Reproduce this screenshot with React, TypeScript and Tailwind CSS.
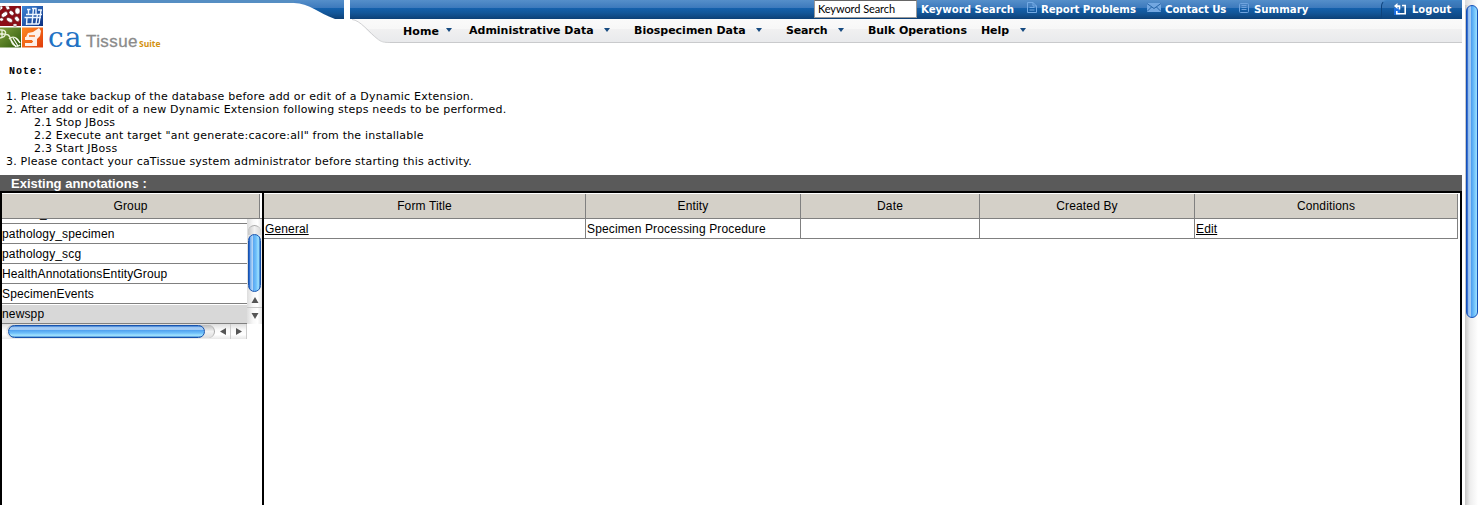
import React from "react";

const verdana = "font-['DejaVu_Sans',sans-serif]";
const helvetica = "font-['Liberation_Sans',sans-serif]";

const steps: { text: string; className: string }[] = [
  { text: "1. Please take backup of the database before add or edit of a Dynamic Extension.", className: "pl-[6px] tracking-[0.22px]" },
  { text: "2. After add or edit of a new Dynamic Extension following steps needs to be performed.", className: "pl-[6px]" },
  { text: "2.1 Stop JBoss", className: "pl-[34px]" },
  { text: '2.2 Execute ant target "ant generate:cacore:all" from the installable', className: "pl-[34px]" },
  { text: "2.3 Start JBoss", className: "pl-[34px]" },
  { text: "3. Please contact your caTissue system administrator before starting this activity.", className: "pl-[6px]" },
];

const groups = ["pathology_specimen", "pathology_scg", "HealthAnnotationsEntityGroup", "SpecimenEvents"];

const columns = [
  { title: "Form Title", width: "w-[322px]", value: "General", link: true },
  { title: "Entity", width: "w-[215px]", value: "Specimen Processing Procedure", link: false },
  { title: "Date", width: "w-[179px]", value: "", link: false },
  { title: "Created By", width: "w-[215px]", value: "", link: false },
  { title: "Conditions", width: "w-[263px]", value: "Edit", link: true },
];

const navItems = [
  { label: "Home", width: "w-[66px]", arrow: "left-[43px]", className: "pt-px", tracking: "tracking-[0.1px]" },
  { label: "Administrative Data", width: "w-[165px]", arrow: "left-[135px]", className: "", tracking: "" },
  { label: "Biospecimen Data", width: "w-[152px]", arrow: "left-[122px]", className: "", tracking: "" },
  { label: "Search", width: "w-[82px]", arrow: "left-[52px]", className: "", tracking: "tracking-[-0.2px]" },
  { label: "Bulk Operations", width: "w-[113px]", arrow: "", className: "", tracking: "tracking-[-0.05px]" },
  { label: "Help", width: "w-[60px]", arrow: "left-[39px]", className: "", tracking: "tracking-[-0.1px]" },
];

function DownArrow() {
  return (
    <svg width="6" height="4" viewBox="0 0 6 4" className="block">
      <path d="M0 0H6L3 4Z" fill="#164a80" />
    </svg>
  );
}

function LogoTiles() {
  return (
    <svg width="43" height="42" viewBox="0 0 43 42" className="block shrink-0">
      <defs>
        <linearGradient id="tileBlue" x1="0" y1="0" x2="1" y2="1">
          <stop offset="0" stopColor="#3f86d8" />
          <stop offset="1" stopColor="#0b2f80" />
        </linearGradient>
        <linearGradient id="tileGreen" x1="0" y1="0" x2="1" y2="1">
          <stop offset="0" stopColor="#7d9f3c" />
          <stop offset="1" stopColor="#2f5a0c" />
        </linearGradient>
        <linearGradient id="tileOrange" x1="0" y1="0" x2="1" y2="1">
          <stop offset="0" stopColor="#ff8a20" />
          <stop offset="1" stopColor="#e03c0c" />
        </linearGradient>
      </defs>
      <rect width="21" height="20" fill="#8c0d15" />
      <g fill="#fff" stroke="#5a060b" strokeWidth=".5">
        <path d="M0 0H2L3 2L0 5Z" />
        <path d="M5 0H9L10 3L7 4Z" />
        <ellipse cx="4.500" cy="8.500" rx="3.600" ry="2.200" transform="rotate(-35 4.500 8.500)" />
        <ellipse cx="11.500" cy="7" rx="2.800" ry="2" transform="rotate(40 11.500 7)" />
        <ellipse cx="17.500" cy="5" rx="2.600" ry="3.200" />
        <ellipse cx="1.500" cy="13.500" rx="2" ry="1.700" />
        <ellipse cx="9.500" cy="14" rx="3.400" ry="2" transform="rotate(30 9.500 14)" />
        <ellipse cx="17" cy="13" rx="2.800" ry="2.100" transform="rotate(50 17 13)" />
        <ellipse cx="15" cy="19" rx="2.200" ry="1.300" />
      </g>
      <rect x="22" width="21" height="20" fill="url(#tileBlue)" />
      <g fill="none" stroke="#eef6ff" strokeWidth="1.400">
        <path d="M26 8.500H42M24.500 11.500H41M26 18H39" />
        <path d="M28.500 3V8M27 11L26.500 19M33.500 2L32 18M37.500 8L36 18M41 4L39 18" />
        <path d="M27 3.500H30.500M32 2.500H36V8M38 4H42" />
      </g>
      <rect y="21.500" width="21" height="20" fill="url(#tileGreen)" />
      <path d="M0 24C8 23 7 31 0 32M0 28C6 28 9 27 11 34S18 41 20 39M9 33C13 29 18 32 20 37" fill="none" stroke="#e6efd2" strokeWidth="1.400" />
      <path d="M2 24V31M11 34L16 41M13 32L18 40M16 32L20 37" stroke="#fff" strokeWidth="1.100" />
      <rect x="22" y="21.500" width="21" height="20" fill="url(#tileOrange)" />
      <path d="M26 31L28 27L33 26L39 22L41 25L40 30L37 33L37 40H25V37H32V34H25V31Z" fill="#fff" opacity=".9" />
      <path d="M29 30H35M25 35.500H33" fill="none" stroke="#f36c18" strokeWidth="1.300" />
    </svg>
  );
}

function Brand() {
  return (
    <div className="relative h-[50px] w-[344px] shrink-0">
      <svg width="344" height="19" viewBox="0 0 344 19" className="absolute left-0 top-0">
        <defs>
          <linearGradient id="bar" x1="0" y1="0" x2="0" y2="19" gradientUnits="userSpaceOnUse">
            <stop offset="0" stopColor="#558fca" />
            <stop offset=".42" stopColor="#3c79bc" />
            <stop offset=".43" stopColor="#1461ad" />
            <stop offset=".7" stopColor="#135698" />
            <stop offset="1" stopColor="#0d4076" />
          </linearGradient>
        </defs>
        <path d="M0 0H344V19H335C318 13 309 3 294 3H0Z" fill="url(#bar)" />
        <path d="M0 0H294V3H0Z" fill="#568ec3" />
      </svg>
      <div className="flex pt-[6px]">
        <LogoTiles />
        <div className="flex h-[42px] items-baseline pl-[5px] pt-[15px]">
          <span className="w-[38px] font-['DejaVu_Serif',serif] text-[28px] leading-[34px] tracking-[1px] text-[#2272c4]">ca</span>
          <span className={`${helvetica} w-[53px] text-[17px] leading-[34px] tracking-[0.4px] text-[#8b8b8b] [-webkit-text-stroke:0.3px_#8b8b8b]`}>Tissue</span>
          <span className="font-['Open_Sans',sans-serif] text-[8.500px] font-bold leading-[34px] text-[#d3920f]">Suite</span>
        </div>
      </div>
    </div>
  );
}

function PageIcon() {
  return (
    <svg width="10" height="11" viewBox="0 0 10 11" fill="none" stroke="#74aae4" className="block">
      <path d="M.5.5H6L9.500 4V10.500H.5ZM6 .5V4H9.500M2.500 5.500H7.500M2.500 8H7.500" />
    </svg>
  );
}

function MailIcon() {
  return (
    <svg width="14" height="9" viewBox="0 0 14 9" className="block">
      <rect width="14" height="9" fill="#72a7e1" />
      <path d="M0 .5L7 5.500L14 .5M0 8.500L4.500 4M14 8.500L9.500 4" fill="none" stroke="#1c5ba0" strokeWidth=".9" />
    </svg>
  );
}

function ListIcon() {
  return (
    <svg width="10" height="10" viewBox="0 0 10 10" fill="none" stroke="#6fa3de" className="block">
      <rect x=".5" y=".5" width="9" height="9" rx="1" />
      <path d="M2.500 2.500H7.500M2.500 4.500H7.500M2.500 6.500H7.500" />
    </svg>
  );
}

function LogoutIcon() {
  return (
    <svg width="13" height="12" viewBox="0 0 13 12" className="block">
      <rect x="0" y="5" width="6" height="7" fill="#1c6fe0" />
      <path d="M2.800 8V10.700H11.200V2.500H8" fill="none" stroke="#fff" strokeWidth="1.600" />
      <path d="M0 3L3.500 0V2.200H6.300V6.500H4.700V4H3.500V6Z" fill="#fff" />
    </svg>
  );
}

const toolText = "text-[10.2px] font-bold leading-[19px] text-white whitespace-nowrap";

function TopBar() {
  return (
    <div className={`${verdana} flex h-[19px] bg-[linear-gradient(#558fca_0px,#3c79bc_8px,#1461ad_8px,#135698_13px,#0d4076_19px)] pl-[464px]`}>
      <div className="h-[18px] w-[103px] shrink-0 border border-[#9a9a9a] border-t-[#666] bg-white pl-[3px] font-['Lato',sans-serif] text-[11px] leading-[16px] tracking-[-0.08px] text-black">
        Keyword Search
      </div>
      <span className={`${toolText} ml-[4px] w-[106px]`}>Keyword Search</span>
      <span className="w-[14px] pt-[2px]"><PageIcon /></span>
      <span className={`${toolText} w-[106px] tracking-[-0.1px]`}>Report Problems</span>
      <span className="w-[18px] pt-[3px]"><MailIcon /></span>
      <span className={`${toolText} w-[74px] tracking-[-0.1px]`}>Contact Us</span>
      <span className="w-[15px] pt-[3px]"><ListIcon /></span>
      <span className={`${toolText} w-[127px]`}>Summary</span>
      <div className="flex h-[19px] w-[81px] rounded-tl-[6px] border-l border-t border-[#3f83c4] border-l-[#0e437c] bg-[linear-gradient(#3f7fc0_0px,#3672b2_7px,#145ca4_7px,#0e447d_18px)] pl-[12px]">
        <span className="w-[18px] pt-[2px]"><LogoutIcon /></span>
        <span className="text-[10px] font-bold leading-[18px] text-white">Logout</span>
      </div>
    </div>
  );
}

function Navigation() {
  return (
    <div className="relative h-[24px] border-b border-[#c9cacc] bg-[linear-gradient(#fafafa_0px,#f7f7f7_10px,#f0f0f1_10px,#e9eaec_23px)]">
      <svg width="40" height="24" viewBox="0 0 40 24" className="absolute left-0 top-0">
        <path d="M0 0H2C14 3 22 23 39 23.500V24H0Z" fill="#fff" />
        <path d="M2 .5C10 1 20 14 27 19.500C31 23 34 23.500 40 23.500" fill="none" stroke="#d0d1d3" />
      </svg>
      <div className={`${verdana} relative flex pl-[53px] pt-[5px] text-[11px] font-bold leading-[14px] text-black`}>
        {navItems.map((item) => (
          <div key={item.label} className={`${item.width} ${item.className} relative shrink-0 whitespace-nowrap`}>
            <span className={item.tracking}>{item.label}</span>
            {item.arrow && (
              <span className={`absolute top-[4px] ${item.arrow}`}><DownArrow /></span>
            )}
          </div>
        ))}
      </div>
    </div>
  );
}

const vAqua = "bg-[linear-gradient(90deg,#0b49c0_0%,#7db4ee_14%,#b4d4f6_32%,#59a7f0_38%,#6fc0fa_65%,#9fe2ff_85%,#2a6fc4_100%)]";

function GroupList() {
  return (
    <div className="w-[260px] shrink-0">
      <div className="mt-px flex h-[24px] w-[258px] items-center justify-center border-r border-[#808080] bg-[#d4d0c8]">Group</div>
      <div className="flex h-[106px] w-[260px] border-t border-[#808080]">
        <div className="h-[105px] w-[245px] overflow-hidden">
          <div className="-mt-[15px] h-[20px] border-b border-[#808080] pl-[38px] leading-[19px]">_</div>
          {groups.map((g) => (
            <div key={g} className="h-[20px] border-b border-[#808080] leading-[20px]">{g}</div>
          ))}
          <div className="mt-px h-[19px] border-b border-[#808080] bg-[#d8d8d8] leading-[18px]">newspp</div>
        </div>
        <div className="flex h-[105px] w-[15px] flex-col bg-[linear-gradient(90deg,#ddd,#f8f8f8_40%,#fff_70%,#e6e6e6)]">
          <div className="mx-px mt-[6px] h-[10px] rounded-t-full border-t border-[#aaa] bg-[linear-gradient(90deg,#c8c8c8,#f2f2f2,#d8d8d8)]" />
          <div className={`-mt-px ml-px h-[58px] w-[13px] rounded-full border border-[#1753ad] ${vAqua}`} />
          <div className="flex h-[16px] items-center justify-center border-b border-[#c8c8c8]">
            <svg width="8" height="6" viewBox="0 0 8 6"><path d="M4 0L7.500 6H.5Z" fill="#555" /></svg>
          </div>
          <div className="flex h-[16px] items-center justify-center">
            <svg width="8" height="6" viewBox="0 0 8 6"><path d="M4 6L7.500 0H.5Z" fill="#555" /></svg>
          </div>
        </div>
      </div>
      <div className="flex h-[15px] w-[245px] bg-[linear-gradient(#ddd,#fafafa_40%,#fff_70%,#e8e8e8)]">
        <div className="my-px ml-[4px] flex w-[209px] rounded-full border-r border-[#aaa] bg-[linear-gradient(#bbb,#f2f2f2,#ddd)]">
          <div className="ml-[2px] h-[13px] w-[197px] rounded-full border border-[#1753ad] bg-[linear-gradient(#3679cf_0%,#a6cdf5_15%,#a0caf5_32%,#50a1ee_38%,#6fc0fa_65%,#a4e5ff_85%,#4f96d9_100%)]" />
        </div>
        <div className="flex w-[16px] items-center justify-center border-r border-[#ccc]">
          <svg width="6" height="7" viewBox="0 0 6 7"><path d="M0 3.500L6 0V7Z" fill="#555" /></svg>
        </div>
        <div className="flex w-[16px] items-center justify-center border-r border-[#ccc]">
          <svg width="6" height="7" viewBox="0 0 6 7"><path d="M6 3.500L0 0V7Z" fill="#555" /></svg>
        </div>
      </div>
    </div>
  );
}

function FormTable() {
  return (
    <div className="flex-1 pt-px">
      <div className="flex h-[25px] w-[1194px] border-b border-[#808080] bg-[#d4d0c8]">
        {columns.map((c) => (
          <div key={c.title} className={`${c.width} flex items-center justify-center border-r border-[#808080]`}>{c.title}</div>
        ))}
      </div>
      <div className="flex h-[20px] w-[1194px] border-b border-[#808080]">
        {columns.map((c) => (
          <div key={c.title} className={`${c.width} border-r border-[#808080] pl-px leading-[20px]`}>
            {c.link ? <a className="underline">{c.value}</a> : c.value}
          </div>
        ))}
      </div>
    </div>
  );
}

export default function App() {
  return (
    <div className="flex h-[505px] w-[1478px] overflow-hidden bg-white text-black">
      <div className="flex w-[1462px] shrink-0 flex-col">
        <header className="flex h-[50px]">
          <Brand />
          <div className="ml-[6px] w-[1115px]">
            <TopBar />
            <Navigation />
          </div>
        </header>
        <section className="h-[125px]">
          <h1 className="pl-[9px] pt-[15px] font-['Liberation_Mono',monospace] text-[10px] font-bold leading-[14px] tracking-[1px]">Note:</h1>
          <div className={`${verdana} pt-[11px] text-[11px] leading-[13px] tracking-[0.2px]`}>
            {steps.map((s) => (
              <p key={s.text} className={s.className}>{s.text}</p>
            ))}
          </div>
        </section>
        <h2 className={`${helvetica} h-[16px] bg-[#5a5a5a] pl-[11px] text-[13px] font-bold leading-[17px] text-white`}>Existing annotations :</h2>
        <main className={`${helvetica} flex flex-1 border-x-2 border-t-2 border-black text-[12px] tracking-[0.14px]`}>
          <GroupList />
          <div className="w-[2px] bg-black" />
          <FormTable />
        </main>
      </div>
      <div className="ml-[3px] w-[13px] shrink-0 bg-[linear-gradient(90deg,#c4c4c4,#eee_40%,#fff)]">
        <div className="h-[5px] bg-[linear-gradient(90deg,#ddd,#fff)]" />
        <div className="ml-px h-[313px] rounded-full border border-[#1450b8] bg-[linear-gradient(90deg,#0b49c0_0%,#9cc4f0_16%,#a4ccf5_38%,#4f9ff0_44%,#6fc0fa_70%,#9fe2ff_100%)]" />
      </div>
    </div>
  );
}
